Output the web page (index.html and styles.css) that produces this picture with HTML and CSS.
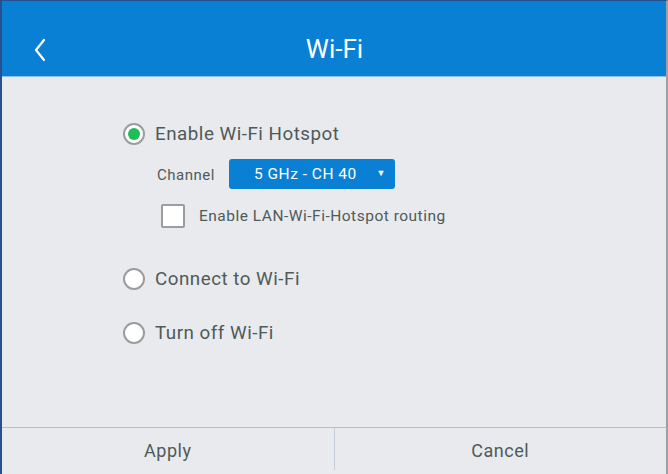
FILE: index.html
```html
<!DOCTYPE html>
<html lang="en">
<head>
    <meta charset="UTF-8">
    <meta name="viewport" content="width=device-width, initial-scale=1.0">
    <title>Wi-Fi</title>
    <link rel="stylesheet" href="styles.css">
</head>
<body>
    <div class="window">
        <!-- Cabecera -->
        <div class="header">
            <span class="back">
                <svg width="14" height="24" viewBox="0 0 14 24"><path d="M11 2 L3 12 L11 22" fill="none" stroke="#fff" stroke-width="2.2" stroke-linecap="round" stroke-linejoin="round"/></svg>
            </span>
            <span class="title">Wi-Fi</span>
        </div>

        <!-- Opciones -->
        <div class="content">
            <div class="option">
                <span class="radio checked"></span>
                <span>Enable Wi-Fi Hotspot</span>
            </div>
            <div class="channel">
                <span class="channel-label">Channel</span>
                <div class="select">
                    <span>5 GHz - CH 40</span>
                    <span class="arrow">&#9660;</span>
                </div>
            </div>
            <div class="check-row">
                <span class="checkbox"></span>
                <span>Enable LAN-Wi-Fi-Hotspot routing</span>
            </div>
            <div class="option second">
                <span class="radio"></span>
                <span>Connect to Wi-Fi</span>
            </div>
            <div class="option third">
                <span class="radio"></span>
                <span>Turn off Wi-Fi</span>
            </div>
        </div>

        <!-- Botones -->
        <div class="footer">
            <div class="btn">Apply</div>
            <div class="btn">Cancel</div>
        </div>
    </div>
</body>
</html>
```
FILE: styles.css
```css
body {
    margin: 0;
    font-family: Roboto, "Noto Sans", sans-serif;
    background: #e8eaee;
}

.window {
    height: 474px;
    box-sizing: border-box;
    border-left: 2px solid #27508f;
    border-right: 2px solid #9aa1ad;
    border-top: 1px solid #27508f;
    display: flex;
    flex-direction: column;
    background: #e8eaee;
}

/* Cabecera azul */
.header {
    height: 55px;
    padding-top: 20px;
    background: #0a80d5;
    border-bottom: 1px solid #8ec0ea;
    display: flex;
    align-items: center;
    justify-content: center;
    position: relative;
    color: #fff;
}

.back {
    position: absolute;
    left: 31px;
    top: 37px;
    display: flex;
}

.title {
    font-size: 26px;
    margin-left: 1px;
}

.content {
    flex: 1;
    padding: 45px 0 0 121px;
    color: #4f5a59;
    letter-spacing: 0.5px;
}

.option {
    display: flex;
    align-items: center;
    height: 22px;
    font-size: 18.8px;
    padding-top: 1px;
}

.option.second {
    margin-top: 39px;
}

.option.third {
    margin-top: 31px;
}

.radio {
    width: 18px;
    height: 18px;
    border: 2px solid #9a9c9e;
    border-radius: 50%;
    background: #fff;
    margin-right: 10px;
    display: flex;
    align-items: center;
    justify-content: center;
}

.radio.checked::after {
    content: "";
    width: 12px;
    height: 12px;
    border-radius: 50%;
    background: #1cbe58;
}

.channel {
    display: flex;
    align-items: center;
    margin-top: 14px;
    padding-left: 34px;
    font-size: 15px;
}

.channel-label {
    width: 72px;
    padding-top: 2px;
}

.select {
    width: 166px;
    height: 30px;
    background: #0a80d5;
    border-radius: 3px;
    color: #fff;
    display: flex;
    align-items: center;
    position: relative;
    font-size: 15.5px;
}

.select span:first-child {
    margin-left: 25px;
}

.arrow {
    position: absolute;
    right: 9px;
    top: 9px;
    font-size: 9px;
}

.check-row {
    display: flex;
    align-items: center;
    margin-top: 15px;
    padding-left: 38px;
    font-size: 15.5px;
}

.checkbox {
    width: 20px;
    height: 20px;
    border: 2px solid #9a9c9e;
    border-radius: 2px;
    background: #fff;
    margin-right: 14px;
}

/* Pie con botones */
.footer {
    height: 46px;
    border-top: 1px solid #b5c0cf;
    display: flex;
}

.btn {
    flex: 1;
    display: flex;
    align-items: center;
    justify-content: center;
    font-size: 18px;
    letter-spacing: 0.5px;
    color: #4f5a59;
    padding-bottom: 2px;
}

.btn:first-child {
    border-right: 1px solid #c3cbd6;
    margin-bottom: 4px;
    padding-bottom: 0;
    padding-top: 2px;
}
```
